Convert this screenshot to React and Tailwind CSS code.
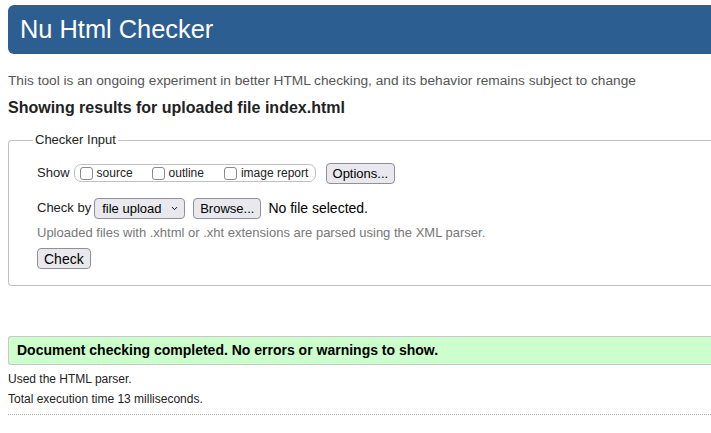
import React from "react";
import { ChevronDown } from "lucide-react";

const btn =
  "inline-flex items-center h-[21px] px-[6px] bg-[#e9e9ed] border border-[#8f8f9d] rounded-[4px] text-[13px] text-black leading-none whitespace-nowrap";

const Box = ({ label, className = "" }) => (
  <span className={`inline-flex items-center ${className}`}>
    <span className="w-[13px] h-[13px] border border-[#8a8a8a] rounded-[3px] bg-white" />
    <span className="ml-[4px] text-[12px]">{label}</span>
  </span>
);

const App = () => {
  return (
    <div className="w-[711px] h-[433px] overflow-hidden bg-white pl-2 pt-[5px] font-['Liberation_Sans',Arial,sans-serif] text-[13px] text-[#222]">
      <div className="h-[49px] bg-[#2c5e91] rounded-l-[6px] flex items-center pl-3 text-white text-[25.4px]">
        Nu Html Checker
      </div>

      <p className="mt-[19px] text-[13.7px] leading-[16px] text-[#555] whitespace-nowrap">
        This tool is an ongoing experiment in better HTML checking, and its
        behavior remains subject to change
      </p>

      <h2 className="mt-[9px] text-[16px] leading-[20px] font-bold text-[#222]">
        Showing results for uploaded file index.html
      </h2>

      <fieldset className="mt-[14px] border border-r-0 border-[#c0c0c0] rounded-l-[4px] pl-6 pt-[14px] pb-[16px]">
        <legend className="px-[2px] leading-[16px]">Checker Input</legend>

        <div className="ml-1 flex items-center h-[22px]">
          <span>Show</span>
          <span className="ml-[4px] inline-flex items-center h-[18px] w-[242px] border border-[#c0c0c0] rounded-[7px] pl-[5px]">
            <Box label="source" />
            <Box label="outline" className="ml-[19px]" />
            <Box label="image report" className="ml-[20px]" />
          </span>
          <span className={`${btn} ml-[10px]`}>Options...</span>
        </div>

        <div className="ml-1 mt-[13px] flex items-center h-[22px]">
          <span>Check by</span>
          <span className={`${btn} ml-[3px] w-[91px] pl-[7px] pr-[5px] justify-between text-[13.5px]`}>
            file upload
            <ChevronDown size={9} strokeWidth={2.5} />
          </span>
          <span className={`${btn} ml-[8px]`}>Browse...</span>
          <span className="ml-[7px] text-[14px] text-black">No file selected.</span>
        </div>

        <p className="ml-1 mt-[6px] leading-[16px] text-[#777]">
          Uploaded files with .xhtml or .xht extensions are parsed using the XML
          parser.
        </p>

        <div className="ml-1 mt-[7px]">
          <span className={`${btn} text-[14px]`}>Check</span>
        </div>
      </fieldset>

      <div className="mt-[50px] h-[29px] bg-[#ccffcc] border border-r-0 border-[#c8c8c8] rounded-l-[3px] flex items-center pl-2 text-[14px] font-bold text-black">
        Document checking completed. No errors or warnings to show.
      </div>

      <p className="mt-[7px] text-[12px] leading-[15px]">Used the HTML parser.</p>
      <p className="mt-[5px] text-[12px] leading-[15px]">
        Total execution time 13 milliseconds.
      </p>
      <div className="mt-[7px] border-t border-dotted border-[#aaa]" />
    </div>
  );
};

export default App;
